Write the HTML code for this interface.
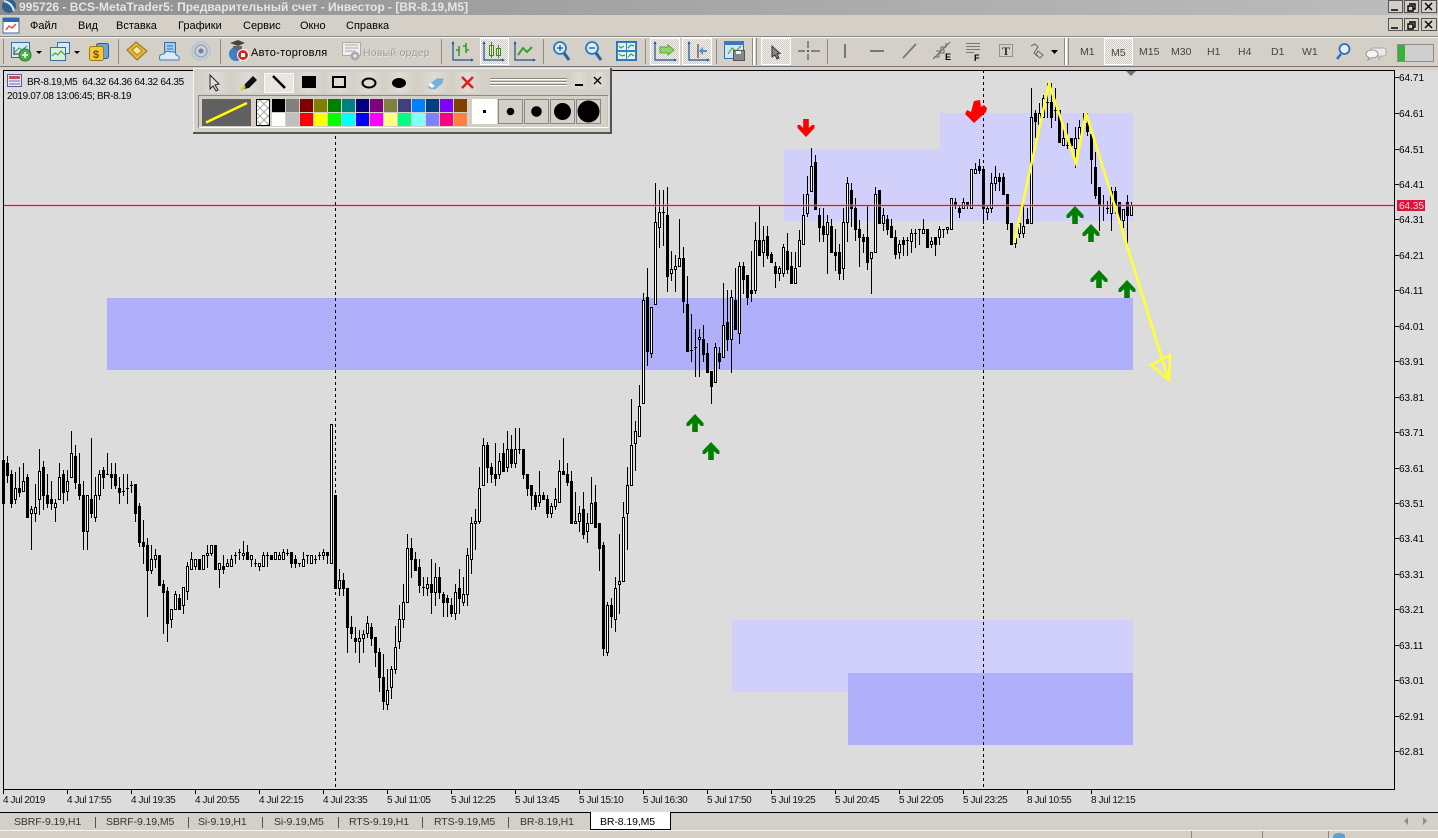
<!DOCTYPE html>
<html><head><meta charset="utf-8"><title>MetaTrader5</title>
<style>
html,body{margin:0;padding:0;background:#d4d0c8;width:1438px;height:838px;overflow:hidden}
svg{display:block;position:absolute;left:0;top:0}
text{font-family:"Liberation Sans","Noto Sans CJK SC",sans-serif;white-space:pre}
.m{font-size:11px;fill:#000}
.p{font-size:10px;fill:#000}
.t{font-size:10px;fill:#111;letter-spacing:-.42px}
.b{font-size:10.5px;fill:#333;letter-spacing:-.1px}
.tf{font-size:10.5px;fill:#444}
</style></head><body>
<svg width="1438" height="838" viewBox="0 0 1438 838" xmlns="http://www.w3.org/2000/svg">
<defs>
<linearGradient id="tg" x1="0" x2="1" y1="0" y2="0"><stop offset="0" stop-color="#8d8d8d"/><stop offset=".4" stop-color="#a3a3a3"/><stop offset="1" stop-color="#bdbdbd"/></linearGradient>
<linearGradient id="bg" x1="0" x2="1" y1="0" y2="0"><stop offset="0" stop-color="#d4d0c8"/><stop offset=".5" stop-color="#dedcd6"/><stop offset="1" stop-color="#d4d0c8"/></linearGradient>
<pattern id="d" width="2" height="2" patternUnits="userSpaceOnUse"><rect width="2" height="2" fill="#f2f1ee"/><rect width="1" height="1" fill="#cfcbc3"/><rect x="1" y="1" width="1" height="1" fill="#cfcbc3"/></pattern>
<pattern id="c" width="8" height="8" patternUnits="userSpaceOnUse"><rect width="8" height="8" fill="#fff"/><path d="M0 0L8 8M8 0L0 8" stroke="#aaa" stroke-width="1"/></pattern>
<polygon id="ga" points="0,0 8.500,9 8.500,12 6,12 2.800,9 2.800,18 -2.800,18 -2.800,9 -6,12 -8.500,12 -8.500,9"/>
</defs>

<!-- title bar -->
<rect x="0" y="0" width="1438" height="15" fill="url(#tg)"/>
<circle cx="9" cy="6" r="7" fill="#2f5f93"/><path d="M4 1Q12 3 14 11" stroke="#dfe8f0" stroke-width="2" fill="none"/>
<text x="19" y="11" style="font-size:12px;font-weight:bold;fill:#e6e6e6">995726 - BCS-MetaTrader5: Предварительный счет - Инвестор - [BR-8.19,M5]</text>

<!-- menu -->
<rect x="0" y="15" width="1438" height="21" fill="#d4d0c8"/>
<rect x="3" y="18" width="16" height="15" fill="#fff" stroke="#3a6ea8"/><rect x="3" y="18" width="16" height="4" fill="#2f66b0"/><path d="M6 30l3-4 3 2 4-4" stroke="#d43" stroke-width="1.3" fill="none"/>
<g class="m"><text class="m" x="30" y="29">Файл</text><text class="m" x="78" y="29">Вид</text><text class="m" x="116" y="29">Вставка</text><text class="m" x="178" y="29">Графики</text><text class="m" x="243" y="29">Сервис</text><text class="m" x="300" y="29">Окно</text><text class="m" x="346" y="29">Справка</text></g>

<!-- window buttons -->
<g stroke="#555" fill="#d4d0c8">
<rect x="1388.500" y="0.500" width="14" height="12"/><rect x="1404.500" y="0.500" width="14" height="12"/><rect x="1421.500" y="0.500" width="15" height="12"/>
<rect x="1388.500" y="18.500" width="14" height="12"/><rect x="1404.500" y="18.500" width="14" height="12"/><rect x="1421.500" y="18.500" width="15" height="12"/>
</g>
<g stroke="#000" fill="none" stroke-width="1.400">
<path d="M1391 10h7M1391 28h7"/>
<path d="M1409 4h6v5h-2M1408 6h5v5h-5z M1409 22h6v5h-2M1408 24h5v5h-5z"/>
<path d="M1425 3l7 7M1432 3l-7 7M1425 21l7 7M1432 21l-7 7"/>
</g>

<!-- toolbar -->
<rect x="0" y="36" width="1438" height="1" fill="#8a8a8a"/><rect x="0" y="37" width="1438" height="1" fill="#f4f3f0"/>
<rect x="0" y="66" width="1438" height="1" fill="#77757a"/><rect x="0" y="67" width="1438" height="3" fill="#d4d0c8"/>
<g stroke="#8e8b84" stroke-width="1">
<path d="M3.500 39v25M118.500 39v25M220.500 39v25M441.500 39v25M543.500 39v25M645.500 39v25M716.500 39v25M827.500 39v25"/>
<path d="M752.500 38v27M756.500 38v27M1064.500 38v27M1068.500 38v27"/>
</g>
<g fill="#fff"><rect x="753" y="38" width="2" height="27"/><rect x="1065" y="38" width="2" height="27"/></g>

<!-- new chart -->
<rect x="11.500" y="42.500" width="18" height="15" fill="#d6e8f6" stroke="#3270a8"/><path d="M14 47v8M14 54h10" stroke="#335" fill="none"/><path d="M15 52l4-4 3 2 5-4" stroke="#3a9a3a" fill="none"/>
<circle cx="25" cy="55" r="6" fill="#4cae4c" stroke="#2a7a2a"/><path d="M22 55h6M25 52v6" stroke="#fff" stroke-width="1.500"/>
<path d="M36 51h6l-3 3z" fill="#000"/>
<!-- profiles -->
<rect x="57.500" y="42.500" width="12" height="11" fill="#d6e8f6" stroke="#3270a8"/>
<rect x="50.500" y="47.500" width="15" height="13" fill="#d8f0d8" stroke="#3270a8"/><path d="M52 56l3-3 3 2 3-4 4 4" stroke="#2b9a2b" fill="none"/>
<path d="M74 51h6l-3 3z" fill="#000"/>
<!-- market -->
<rect x="96.500" y="43.500" width="12" height="15" rx="2" fill="#6aa6dc" stroke="#2c5d94"/>
<rect x="89.500" y="46.500" width="14" height="14" rx="2" fill="#f4c93e" stroke="#a57b10"/>
<text x="93" y="58" style="font-size:11px;font-weight:bold;fill:#735200">$</text>
<!-- books -->
<path d="M127 50l9-8 11 9-10 9z" fill="#e3b73c" stroke="#90701c"/><path d="M132 50l5-4 5 5-5 4z" fill="#f6e4a0" stroke="#a58328"/>
<!-- cloud -->
<rect x="164.500" y="42.500" width="11" height="12" fill="#a6cbee" stroke="#3270a8"/><path d="M167 46h6M167 49h6" stroke="#3270a8"/>
<path d="M160 60q-2-6 4-6q2-4 6-2q6-1 6 3q4 1 3 5z" fill="#dcebf8" stroke="#3a7ec0"/>
<!-- signals -->
<g fill="none" stroke="#a6bedc"><circle cx="201" cy="51" r="9" stroke-width="1"/><circle cx="201" cy="51" r="6" stroke="#8ca8ce" stroke-width="1.500"/></g><circle cx="201" cy="51" r="2.500" fill="#5a82c4"/>
<!-- auto -->
<circle cx="236" cy="54" r="7" fill="#3f7fc8"/><path d="M230 43l8-3 7 3-7 3z" fill="#444"/><path d="M233 46v3q5 2 9 0v-3" fill="#666"/><circle cx="243" cy="55" r="5.500" fill="#d42b1e" stroke="#fff"/><rect x="241" y="53" width="4" height="4" fill="#fff"/>
<text class="m" x="251" y="56" style="font-size:11px;letter-spacing:.3px">Авто-торговля</text>
<!-- order -->
<rect x="342.500" y="42.500" width="18" height="13" fill="#eee" stroke="#aaa"/><path d="M345 45h13M345 48h13M345 51h10" stroke="#aaa"/><circle cx="355" cy="56" r="4.500" fill="#aaa"/><path d="M353 56h4M355 54v4" stroke="#fff"/>
<text x="363.500" y="56.500" style="font-size:10.500px;fill:#f4f3f0;letter-spacing:.2px">Новый ордер</text>
<text x="363" y="56" style="font-size:10.500px;fill:#9a9892;letter-spacing:.2px">Новый ордер</text>

<!-- selected boxes -->
<g fill="url(#d)" stroke="#fff"><rect x="480.500" y="38.500" width="28" height="26"/><rect x="650.500" y="38.500" width="29" height="26"/><rect x="682.500" y="38.500" width="29" height="26"/><rect x="761.500" y="38.500" width="29" height="26"/><rect x="1104.500" y="38.500" width="28" height="26"/></g>

<!-- chart type icons -->
<g fill="none" stroke="#1f4f96" stroke-width="1.200">
<path d="M453 43v17h18M515 43v17h18M484 43v17h18M655 43v17h19M689 43v17h18"/>
</g>
<g fill="#1f4f96"><path d="M451.500 44l1.500-3 1.500 3zM471 58.500l3 1.500-3 1.500zM513.500 44l1.500-3 1.500 3zM533 58.500l3 1.500-3 1.500zM482.500 44l1.500-3 1.500 3zM502 58.500l3 1.500-3 1.500zM653.500 44l1.500-3 1.500 3zM674 58.500l3 1.500-3 1.500zM687.500 44l1.500-3 1.500 3zM707 58.500l3 1.500-3 1.500z"/></g>
<path d="M459 46v10M456 50h3M466 43v10M463 46h3M466 50h3" stroke="#2a9a2a" stroke-width="1.500" fill="none"/>
<rect x="489.500" y="45.500" width="4" height="10" fill="#f3f3c0" stroke="#3a8a2a"/><rect x="496.500" y="48.500" width="4" height="7" fill="#f3f3c0" stroke="#3a8a2a"/><path d="M491.500 42v16M498.500 45v13" stroke="#3a8a2a"/>
<path d="M518 55l5-7 4 4 5-5" stroke="#3aa02a" stroke-width="2" fill="none"/>

<!-- zoom -->
<g fill="#d8ecfa" stroke="#2f78c0" stroke-width="1.800"><circle cx="560" cy="48" r="6"/><circle cx="592" cy="48" r="6"/></g>
<path d="M564 53l5 7M596 53l5 7" stroke="#2a5fa8" stroke-width="3"/>
<path d="M557 48h6M560 45v6M589 48h6" stroke="#1f4f96" stroke-width="1.200"/>
<!-- tile -->
<rect x="616.500" y="41.500" width="20" height="19" fill="#2f82c8" stroke="#2f6fb8"/><g fill="#dff0f8"><rect x="618" y="43" width="8" height="7"/><rect x="627" y="43" width="8" height="7"/><rect x="618" y="52" width="8" height="7"/><rect x="627" y="52" width="8" height="7"/></g>
<path d="M619 46l2 2 3-2M628 48l3-3 3 1M619 54l3 2 3-1M628 57l3-3 3 2" stroke="#2a8a2a" fill="none"/>
<!-- shift / scroll -->
<path d="M660 47h8v-2l6 5-6 5v-2h-8z" fill="#8fd46a" stroke="#5aa83a"/>
<path d="M698 44v14" stroke="#543" stroke-width="1.200"/><path d="M707 50h-4v-3l-4 4 4 4v-3h4z" fill="#4f90d8"/>
<!-- template -->
<rect x="724.500" y="41.500" width="19" height="17" fill="#cfe6f5" stroke="#3270a8"/><rect x="724" y="41" width="20" height="4" fill="#3a78c0"/><path d="M728 54l4-6 4 3 5-5" stroke="#3a9a2a" fill="none"/>
<rect x="733.500" y="50.500" width="11" height="10" fill="#888" stroke="#555"/><rect x="736" y="51" width="5" height="3" fill="#eee"/>

<!-- cursor & tools -->
<path d="M772 46l0 11 3-2 2 4 2-1-2-4 3-.5z" fill="#888" stroke="#333"/>
<path d="M808 41v7M808 54v6M798 51h7M811 51h9" stroke="#555" stroke-width="1.200"/><rect x="807" y="50" width="2" height="2" fill="#555"/>
<path d="M845 44v14M870 51h14" stroke="#777" stroke-width="2"/><path d="M903 58l13-14" stroke="#777" stroke-width="1.800"/>
<path d="M933 59l17-17M936 51h5v-4h5v-4M934 57h5v-4h5v-4" stroke="#666" fill="none"/><text x="945" y="60" style="font-size:9px;font-weight:bold;fill:#000">E</text>
<g fill="#777"><path d="M966 43h14v1h-14zM966 46h14v1h-14zM966 49h14v1h-14zM966 52h8v1h-8z" /></g><text x="974" y="61" style="font-size:9px;font-weight:bold;fill:#000">F</text>
<rect x="999.500" y="44.500" width="13" height="12" fill="none" stroke="#555" stroke-dasharray="1 1"/><text x="1002" y="55" style="font-size:12px;font-weight:bold;font-family:'Liberation Serif',serif;fill:#333">T</text>
<path d="M1031 46l4-2 3 3-4 6 4 3M1038 51l5 4-3 3-4-3z" stroke="#666" fill="none"/>
<path d="M1051 50h7l-3.500 4z" fill="#000"/>

<!-- timeframes -->
<text class="tf" x="1080" y="55">M1</text><text class="tf" x="1111" y="56">M5</text><text class="tf" x="1139" y="55">M15</text><text class="tf" x="1171" y="55">M30</text><text class="tf" x="1207" y="55">H1</text><text class="tf" x="1238" y="55">H4</text><text class="tf" x="1271" y="55">D1</text><text class="tf" x="1302" y="55">W1</text>
<circle cx="1344.500" cy="49" r="5" fill="#e6f0fa" stroke="#2c6fc0" stroke-width="1.800"/><path d="M1341 54l-4 5" stroke="#2c6fc0" stroke-width="2.500"/>
<path d="M1371 48h13q2 0 2 2v4q0 2-2 2h-3l-2 3v-3h-8z" fill="#e8e8e8" stroke="#aaa"/><ellipse cx="1372" cy="54" rx="6" ry="4" fill="#f6f6f6" stroke="#999"/><path d="M1369 57l-1 3 3-2" fill="#f6f6f6" stroke="#999"/>
<rect x="1397.500" y="44.500" width="36" height="17" fill="#cfcfcf" stroke="#8d8d8d"/><rect x="1398" y="45" width="7" height="16" fill="#38b138"/>

<!-- chart bg -->
<rect x="0" y="70" width="1438" height="742" fill="#dcdcdc"/>
<rect x="0" y="67" width="1438" height="3" fill="#d4d0c8"/>

<!-- zones -->
<path d="M784 149H940V113H1133V221H784z" fill="#d0d0fb"/>
<rect x="732" y="620" width="401" height="72" fill="#d0d0fb"/>
<rect x="107" y="298" width="1026" height="72" fill="#b0b0fa"/>
<rect x="848" y="673" width="285" height="72" fill="#b0b0fa"/>

<!-- candles -->
<g transform="translate(.5 .5)">
<path fill="none" stroke="#000" stroke-width="1" stroke-linecap="square" d="M3 460V503M7 456V482M11 470V507M15 472V503M19 467V496M23 463V491M27 474V517M31 506V549M35 484V521M39 449V514M43 461V509M47 474V507M51 481V509M55 499V521M59 463V499M63 470V503M67 470V500M71 431V477M75 445V488M79 453V499M83 481V549M87 495V549M91 438V517M95 477V521M99 470V499M103 467V488M107 453V474M111 463V488M115 463V488M119 477V503M123 474V495M127 474V503M131 481V492M135 484V521M139 503V546M143 520V563M147 538V616M151 545V573M155 549V567M159 555V585M163 580V633M167 587V641M171 609V627M175 591V609M179 594V609M183 587V613M187 562V599M191 552V569M195 559V569M199 559V569M203 555V569M207 545V567M211 545V555M215 545V569M219 563V587M223 555V573M227 559V566M231 555V566M235 552V563M239 549V559M243 541V559M247 545V559M251 555V566M255 559V566M259 563V570M263 552V566M267 552V566M271 555V559M275 552V559M279 552V559M283 549V559M287 549V555M291 552V567M295 555V567M299 563V566M303 552V566M307 555V563M311 555V563M315 555V563M319 552V559M323 549V559M327 552V563M331 424V563M335 495V588M339 569V595M343 573V595M347 588V652M351 616V638M355 627V652M359 630V662M363 630V652M367 616V637M371 623V645M375 637V666M379 648V691M383 654V709M387 669V709M391 666V698M395 626V673M399 605V648M403 584V627M407 534V602M411 538V577M415 552V570M419 559V592M423 577V595M427 577V595M431 559V613M435 563V605M439 567V598M443 592V616M447 595V616M451 598V616M455 584V619M459 569V613M463 577V605M467 548V605M471 517V573M475 509V549M479 467V523M483 438V485M487 442V482M491 463V482M495 443V485M499 453V478M503 443V471M507 431V471M511 435V467M515 428V467M519 428V453M523 449V478M527 474V495M531 485V509M535 492V509M539 471V506M543 492V499M547 495V517M551 503V517M555 488V509M559 460V502M563 438V474M567 463V485M571 471V523M575 492V523M579 506V531M583 492V538M587 513V542M591 477V523M595 485V527M599 523V570M603 542V655M607 602V655M611 598V627M615 577V631M619 534V613M623 502V581M627 467V549M631 399V485M635 421V470M639 385V436M643 293V403M647 268V365M651 307V357M655 183V304M659 190V247M663 190V245M667 187V291M671 251V280M675 255V291M679 219V266M683 247V312M687 276V351M691 314V361M695 329V376M699 329V376M703 325V361M707 343V372M711 371V403M715 343V382M719 347V368M723 283V357M727 290V350M731 290V372M735 268V329M739 262V343M743 262V293M747 275V304M751 251V301M755 222V293M759 205V255M763 226V266M767 226V258M771 252V262M775 262V287M779 266V280M783 244V276M787 233V273M791 252V283M795 252V283M799 230V266M803 194V244M807 176V216M811 148V191M815 155V209M819 208V241M823 208V241M827 215V273M831 219V252M835 229V270M839 244V279M843 208V279M847 177V241M851 183V226M855 198V240M859 220V266M863 234V252M867 205V269M871 252V293M875 187V252M879 190V223M883 208V230M887 215V234M891 219V237M895 230V258M899 240V258M903 237V255M907 237V255M911 229V252M915 229V247M919 229V244M923 219V233M927 229V247M931 237V247M935 237V255M939 226V244M943 229V237M947 227V233M951 198V229M955 198V208M959 205V217M963 198V208M967 202V208M971 169V208M975 163V173M979 159V173M983 166V223M987 205V219M991 173V212M995 166V190M999 173V190M1003 173V194M1007 194V229M1011 223V244M1015 237V247M1019 213V237M1023 203V237M1027 208V223M1031 88V223M1035 110V137M1039 103V127M1043 95V117M1047 83V117M1051 83V127M1055 88V120M1059 110V142M1063 127V145M1067 123V148M1071 138V148M1075 127V167M1079 120V138M1083 113V127M1087 113V135M1091 131V183M1095 152V198M1099 187V230M1103 195V220M1107 201V213M1111 187V230M1115 187V213M1119 202V223M1123 209V227M1127 195V243M1131 202V215M106 474h2M122 491h2M126 488h2M130 485h2M234 555h2M238 552h2M254 563h2M266 555h2M286 553h2M298 563h2M306 555h2M314 559h2M318 555h2M422 587h2M518 449h2M662 212h2M690 350h2M694 347h2M906 240h2M914 233h2M918 229h2M942 229h2M1046 102h2M1054 110h2M1066 145h2M1102 205h2M1106 208h2"/>
<path fill="#fff" stroke="#000" stroke-width="1" d="M14 488h2v11h-2zM22 481h2v10h-2zM30 509h2v4h-2zM34 507h2v6h-2zM38 471h2v28h-2zM54 503h2v4h-2zM58 477h2v22h-2zM66 481h2v10h-2zM70 453h2v24h-2zM86 495h2v36h-2zM94 495h2v22h-2zM98 474h2v21h-2zM150 559h2v11h-2zM154 555h2v4h-2zM170 609h2v10h-2zM174 594h2v15h-2zM182 587h2v18h-2zM186 566h2v25h-2zM190 559h2v10h-2zM194 559h2v7h-2zM202 555h2v14h-2zM206 553h2v2h-2zM210 545h2v8h-2zM218 563h2v6h-2zM226 563h2v3h-2zM230 559h2v7h-2zM242 553h2v2h-2zM250 555h2v4h-2zM258 563h2v3h-2zM262 555h2v11h-2zM274 552h2v7h-2zM278 555h2v4h-2zM282 552h2v7h-2zM302 559h2v7h-2zM310 555h2v8h-2zM322 552h2v3h-2zM330 424h2v139h-2zM338 580h2v8h-2zM358 638h2v3h-2zM362 634h2v4h-2zM366 623h2v10h-2zM386 690h2v14h-2zM390 669h2v18h-2zM394 647h2v22h-2zM398 619h2v22h-2zM402 602h2v17h-2zM406 548h2v54h-2zM426 584h2v4h-2zM434 577h2v15h-2zM454 592h2v21h-2zM462 594h2v8h-2zM466 555h2v39h-2zM470 523h2v36h-2zM474 521h2v2h-2zM478 488h2v33h-2zM482 445h2v40h-2zM498 461h2v13h-2zM506 449h2v18h-2zM514 449h2v14h-2zM538 495h2v7h-2zM550 506h2v7h-2zM554 499h2v7h-2zM558 471h2v31h-2zM574 521h2v2h-2zM578 513h2v8h-2zM586 523h2v8h-2zM590 503h2v20h-2zM606 605h2v47h-2zM614 588h2v31h-2zM618 581h2v3h-2zM622 517h2v64h-2zM626 485h2v28h-2zM630 445h2v40h-2zM634 431h2v12h-2zM638 406h2v30h-2zM642 300h2v103h-2zM650 307h2v46h-2zM654 222h2v82h-2zM658 212h2v15h-2zM670 269h2v4h-2zM674 266h2v3h-2zM678 258h2v8h-2zM698 337h2v2h-2zM714 347h2v35h-2zM722 325h2v32h-2zM730 297h2v42h-2zM738 266h2v67h-2zM754 240h2v50h-2zM762 240h2v12h-2zM778 268h2v5h-2zM782 247h2v26h-2zM794 268h2v15h-2zM798 240h2v26h-2zM802 215h2v29h-2zM806 194h2v19h-2zM810 166h2v25h-2zM826 222h2v12h-2zM842 222h2v46h-2zM846 183h2v39h-2zM870 252h2v6h-2zM874 194h2v58h-2zM882 215h2v8h-2zM898 244h2v8h-2zM910 233h2v8h-2zM922 229h2v4h-2zM930 241h2v3h-2zM938 229h2v8h-2zM946 227h2v2h-2zM950 198h2v31h-2zM962 202h2v6h-2zM970 169h2v39h-2zM974 169h2v4h-2zM986 208h2v4h-2zM990 183h2v25h-2zM994 177h2v6h-2zM1014 238h2v5h-2zM1018 223h2v10h-2zM1022 226h2v7h-2zM1030 117h2v106h-2zM1038 113h2v11h-2zM1042 98h2v19h-2zM1062 138h2v7h-2zM1074 138h2v10h-2zM1078 127h2v11h-2zM1110 191h2v22h-2zM1122 209h2v11h-2zM1130 205h2v10h-2z"/>
<path fill="#000" stroke="#000" stroke-width="1" d="M2 460h2v43h-2zM6 463h2v12h-2zM10 474h2v29h-2zM18 488h2v4h-2zM26 477h2v40h-2zM42 467h2v28h-2zM46 495h2v8h-2zM50 499h2v4h-2zM62 474h2v18h-2zM74 456h2v26h-2zM78 484h2v11h-2zM82 495h2v36h-2zM90 499h2v14h-2zM102 470h2v7h-2zM110 474h2v3h-2zM114 474h2v11h-2zM118 488h2v4h-2zM134 484h2v29h-2zM138 506h2v36h-2zM142 542h2v4h-2zM146 545h2v25h-2zM158 555h2v30h-2zM162 584h2v8h-2zM166 591h2v32h-2zM178 598h2v11h-2zM198 559h2v10h-2zM214 545h2v24h-2zM222 566h2v3h-2zM246 552h2v7h-2zM270 555h2v4h-2zM290 552h2v11h-2zM294 559h2v4h-2zM326 552h2v3h-2zM334 495h2v93h-2zM342 580h2v8h-2zM346 588h2v39h-2zM350 627h2v6h-2zM354 638h2v3h-2zM370 627h2v11h-2zM374 637h2v15h-2zM378 652h2v25h-2zM382 677h2v24h-2zM410 548h2v11h-2zM414 559h2v11h-2zM418 567h2v18h-2zM430 584h2v8h-2zM438 577h2v15h-2zM442 594h2v8h-2zM446 598h2v4h-2zM450 605h2v8h-2zM458 588h2v10h-2zM486 445h2v22h-2zM490 467h2v7h-2zM494 474h2v4h-2zM502 453h2v18h-2zM510 449h2v14h-2zM522 449h2v25h-2zM526 474h2v14h-2zM530 485h2v10h-2zM534 495h2v11h-2zM542 495h2v4h-2zM546 499h2v14h-2zM562 471h2v3h-2zM566 474h2v8h-2zM570 481h2v42h-2zM582 509h2v25h-2zM594 502h2v25h-2zM598 523h2v25h-2zM602 545h2v103h-2zM610 605h2v11h-2zM646 297h2v54h-2zM666 215h2v61h-2zM682 258h2v43h-2zM686 304h2v47h-2zM702 339h2v15h-2zM706 353h2v19h-2zM710 371h2v15h-2zM718 353h2v8h-2zM726 322h2v17h-2zM734 300h2v29h-2zM742 266h2v13h-2zM746 275h2v22h-2zM750 290h2v3h-2zM758 240h2v15h-2zM766 236h2v19h-2zM770 254h2v8h-2zM774 266h2v7h-2zM786 251h2v18h-2zM790 266h2v17h-2zM814 162h2v47h-2zM818 215h2v12h-2zM822 226h2v8h-2zM830 226h2v26h-2zM834 252h2v3h-2zM838 252h2v21h-2zM850 190h2v18h-2zM854 208h2v21h-2zM858 229h2v8h-2zM862 237h2v4h-2zM866 237h2v25h-2zM878 190h2v33h-2zM886 219h2v10h-2zM890 226h2v11h-2zM894 237h2v17h-2zM902 240h2v4h-2zM926 229h2v18h-2zM934 237h2v7h-2zM954 202h2v3h-2zM958 208h2v4h-2zM966 202h2v3h-2zM978 166h2v4h-2zM982 169h2v39h-2zM998 177h2v4h-2zM1002 177h2v17h-2zM1006 194h2v29h-2zM1010 223h2v21h-2zM1026 219h2v4h-2zM1034 113h2v8h-2zM1050 102h2v15h-2zM1058 110h2v32h-2zM1070 138h2v7h-2zM1086 123h2v8h-2zM1090 134h2v25h-2zM1094 167h2v28h-2zM1098 187h2v18h-2zM1114 191h2v14h-2zM1118 202h2v18h-2zM1126 202h2v13h-2z"/>
</g>

<!-- red price line -->
<rect x="4" y="204" width="1390" height="3" fill="#f0a0b0" opacity=".4"/>
<rect x="4" y="205" width="1390" height="1" fill="#e8102c"/>

<!-- period separators -->
<path d="M335.500 70V789M983.500 70V789" stroke="#000" stroke-dasharray="3 3" fill="none"/>

<!-- yellow lines -->
<path d="M1014 243L1049 84L1076 163L1086 113L1168 378" fill="none" stroke="#ffff33" stroke-width="2.600"/>
<path d="M1169 380L1151 365L1170 355z" fill="none" stroke="#ffff33" stroke-width="2.500"/>

<!-- arrows -->
<g fill="#008000">
<use href="#ga" x="1075" y="206"/><use href="#ga" x="1091" y="224"/><use href="#ga" x="1099" y="270"/><use href="#ga" x="1127" y="280"/><use href="#ga" x="695" y="414"/><use href="#ga" x="711" y="442"/>
</g>
<g fill="#ff0000">
<use href="#ga" transform="translate(806 137) scale(1 -1)"/>
<polygon points="974,123 965,114 967,110 971,112 974,101 980,100 981,107 984,105 987,108 986,112"/>
</g>

<!-- frame -->
<rect x="3.500" y="70.500" width="1391" height="719" fill="none" stroke="#000"/>
<path d="M1126 71h10l-5 5z" fill="#6a737e"/>

<!-- price axis -->
<g stroke="#000"><path d="M1395 77.500h4M1395 113.500h4M1395 149.500h4M1395 184.500h4M1395 219.500h4M1395 255.500h4M1395 290.500h4M1395 326.500h4M1395 361.500h4M1395 397.500h4M1395 432.500h4M1395 468.500h4M1395 503.500h4M1395 538.500h4M1395 574.500h4M1395 609.500h4M1395 645.500h4M1395 680.500h4M1395 716.500h4M1395 751.500h4"/></g>
<text class="p" x="1399" y="81">64.71</text><text class="p" x="1399" y="117">64.61</text><text class="p" x="1399" y="153">64.51</text><text class="p" x="1399" y="188">64.41</text><text class="p" x="1399" y="223">64.31</text><text class="p" x="1399" y="259">64.21</text><text class="p" x="1399" y="294">64.11</text><text class="p" x="1399" y="330">64.01</text><text class="p" x="1399" y="365">63.91</text><text class="p" x="1399" y="401">63.81</text><text class="p" x="1399" y="436">63.71</text><text class="p" x="1399" y="472">63.61</text><text class="p" x="1399" y="507">63.51</text><text class="p" x="1399" y="542">63.41</text><text class="p" x="1399" y="578">63.31</text><text class="p" x="1399" y="613">63.21</text><text class="p" x="1399" y="649">63.11</text><text class="p" x="1399" y="684">63.01</text><text class="p" x="1399" y="720">62.91</text><text class="p" x="1399" y="755">62.81</text>
<rect x="1397" y="200" width="28" height="11" fill="#dc143c"/><text x="1399" y="209" style="font-size:10px;fill:#f4d8dc">64.35</text>

<!-- time axis -->
<path d="M3.500 790v4M67.500 790v4M131.500 790v4M195.500 790v4M259.500 790v4M323.500 790v4M387.500 790v4M451.500 790v4M515.500 790v4M579.500 790v4M643.500 790v4M707.500 790v4M771.500 790v4M835.500 790v4M899.500 790v4M963.500 790v4M1027.500 790v4M1091.500 790v4" stroke="#000"/>
<text class="t" x="3" y="803">4 Jul 2019</text><text class="t" x="67" y="803">4 Jul 17:55</text><text class="t" x="131" y="803">4 Jul 19:35</text><text class="t" x="195" y="803">4 Jul 20:55</text><text class="t" x="259" y="803">4 Jul 22:15</text><text class="t" x="323" y="803">4 Jul 23:35</text><text class="t" x="387" y="803">5 Jul 11:05</text><text class="t" x="451" y="803">5 Jul 12:25</text><text class="t" x="515" y="803">5 Jul 13:45</text><text class="t" x="579" y="803">5 Jul 15:10</text><text class="t" x="643" y="803">5 Jul 16:30</text><text class="t" x="707" y="803">5 Jul 17:50</text><text class="t" x="771" y="803">5 Jul 19:25</text><text class="t" x="835" y="803">5 Jul 20:45</text><text class="t" x="899" y="803">5 Jul 22:05</text><text class="t" x="963" y="803">5 Jul 23:25</text><text class="t" x="1027" y="803">8 Jul 10:55</text><text class="t" x="1091" y="803">8 Jul 12:15</text>

<!-- chart info -->
<rect x="7.500" y="74.500" width="14" height="12" fill="#e8e8f4" stroke="#5a5a9a"/><rect x="9" y="76" width="11" height="3" fill="#c05060"/><path d="M9 81h11M9 84h11" stroke="#7070b0"/>
<text x="27" y="85" style="font-size:10px;fill:#000;letter-spacing:-.3px">BR-8.19,M5  64.32 64.36 64.32 64.35</text>
<text x="7" y="99" style="font-size:10px;fill:#000;letter-spacing:-.35px">2019.07.08 13:06:45; BR-8.19</text>

<!-- floating toolbar -->
<rect x="193" y="68" width="419" height="65" fill="#d4d0c8"/>
<path d="M193.500 133V68.500H611" stroke="#f4f3f0" fill="none"/>
<path d="M611 68v65H193" stroke="#55555a" stroke-width="2" fill="none"/>
<g fill="url(#bg)"><rect x="200" y="72" width="29" height="21"/><rect x="234" y="72" width="29" height="21"/><rect x="294" y="72" width="30" height="21"/><rect x="324" y="72" width="30" height="21"/><rect x="354" y="72" width="30" height="21"/><rect x="384" y="72" width="30" height="21"/><rect x="420" y="72" width="30" height="21"/><rect x="453" y="72" width="30" height="21"/><rect x="570" y="72" width="18" height="17"/><rect x="590" y="72" width="17" height="17"/></g>
<rect x="264.500" y="73.500" width="29" height="19" fill="#e8e6e0" stroke="#f8f8f6"/>
<path d="M210 75l0 14 3-3 3 5 2-1-3-5 4-1z" fill="#ddd" stroke="#222"/>
<path d="M243 89l2-5 8-8 4 4-8 8z" fill="#111"/><path d="M241 90l4-4" stroke="#d8d800" stroke-width="2.500"/>
<path d="M273 76l12 12" stroke="#000" stroke-width="2.500"/>
<rect x="302" y="76" width="14" height="12" fill="#000"/>
<rect x="333" y="77" width="12" height="10" fill="none" stroke="#000" stroke-width="2"/>
<ellipse cx="369" cy="83" rx="6.500" ry="4.500" fill="none" stroke="#000" stroke-width="2"/>
<ellipse cx="399" cy="83" rx="7" ry="5" fill="#000"/>
<path d="M429 85l8-6 6 0-1 4-7 6-6-1z" fill="#6ab4e8" stroke="#8ab"/><path d="M428 85l4 3 3-2-4-3z" fill="#fff"/>
<path d="M462 77l11 11M473 77l-11 11" stroke="#e02020" stroke-width="2.500"/>
<path d="M490 78.500h77M490 81.500h77M490 84.500h77" stroke="#8a8880" fill="none"/><path d="M490 79.500h77M490 82.500h77M490 85.500h77" stroke="#fff" fill="none"/>
<rect x="575" y="84" width="8" height="2" fill="#000"/>
<path d="M594 77l7 7M601 77l-7 7" stroke="#000" stroke-width="1.300"/>
<rect x="198.500" y="95.500" width="409" height="32" fill="none" stroke="#8a8880"/>
<path d="M199 127.500H608V96" stroke="#fff" fill="none"/>
<rect x="202" y="99" width="49" height="27" fill="#606060"/>
<path d="M206 122.500L247 103" stroke="#ffff00" stroke-width="2.500"/>
<rect x="256.500" y="99.500" width="13" height="26" fill="url(#c)" stroke="#000"/>
<g>
<rect x="272" y="99" width="13" height="13" fill="#000"/><rect x="286" y="99" width="13" height="13" fill="#808080"/><rect x="300" y="99" width="13" height="13" fill="#800000"/><rect x="314" y="99" width="13" height="13" fill="#808000"/><rect x="328" y="99" width="13" height="13" fill="#008000"/><rect x="342" y="99" width="13" height="13" fill="#008080"/><rect x="356" y="99" width="13" height="13" fill="#000080"/><rect x="370" y="99" width="13" height="13" fill="#800080"/><rect x="384" y="99" width="13" height="13" fill="#808040"/><rect x="398" y="99" width="13" height="13" fill="#404080"/><rect x="412" y="99" width="13" height="13" fill="#0080ff"/><rect x="426" y="99" width="13" height="13" fill="#004080"/><rect x="440" y="99" width="13" height="13" fill="#8000ff"/><rect x="454" y="99" width="13" height="13" fill="#804000"/>
<rect x="272" y="113" width="13" height="13" fill="#fff"/><rect x="286" y="113" width="13" height="13" fill="#c0c0c0"/><rect x="300" y="113" width="13" height="13" fill="#ff0000"/><rect x="314" y="113" width="13" height="13" fill="#ffff00"/><rect x="328" y="113" width="13" height="13" fill="#00ff00"/><rect x="342" y="113" width="13" height="13" fill="#00ffff"/><rect x="356" y="113" width="13" height="13" fill="#0000ff"/><rect x="370" y="113" width="13" height="13" fill="#ff00ff"/><rect x="384" y="113" width="13" height="13" fill="#ffff80"/><rect x="398" y="113" width="13" height="13" fill="#00ff80"/><rect x="412" y="113" width="13" height="13" fill="#80ffff"/><rect x="426" y="113" width="13" height="13" fill="#8080ff"/><rect x="440" y="113" width="13" height="13" fill="#ff0080"/><rect x="454" y="113" width="13" height="13" fill="#ff8040"/>
</g>
<rect x="472" y="99" width="25" height="25" fill="#fff"/>
<g fill="none" stroke="#8a8880"><rect x="498.500" y="99.500" width="24" height="24"/><rect x="524.500" y="99.500" width="24" height="24"/><rect x="550.500" y="99.500" width="24" height="24"/><rect x="576.500" y="99.500" width="24" height="24"/></g>
<g fill="#000"><rect x="483" y="110" width="3" height="3"/><circle cx="510.500" cy="111.500" r="3.800"/><circle cx="536.500" cy="111.500" r="5.300"/><circle cx="562.500" cy="111.500" r="8.500"/><circle cx="588.500" cy="111.500" r="11"/></g>

<!-- tab bar -->
<rect x="0" y="812" width="1438" height="26" fill="#d4d0c8"/>
<rect x="0" y="812" width="1438" height="1" fill="#000"/>
<rect x="0" y="830" width="1438" height="1" fill="#f4f3f0"/>
<path d="M95.500 817v11M188.500 817v11M262.500 817v11M338.500 817v11M422.500 817v11M508.500 817v11" stroke="#55534e"/>
<text class="b" x="14" y="825">SBRF-9.19,H1</text><text class="b" x="106" y="825">SBRF-9.19,M5</text><text class="b" x="198" y="825">Si-9.19,H1</text><text class="b" x="274" y="825">Si-9.19,M5</text><text class="b" x="349" y="825">RTS-9.19,H1</text><text class="b" x="434" y="825">RTS-9.19,M5</text><text class="b" x="520" y="825">BR-8.19,H1</text>
<path d="M590.500 812.500V829.500H670.500V812.500" fill="#fff" stroke="#000"/>
<rect x="591" y="812" width="79" height="1" fill="#fff"/>
<text class="b" x="600" y="825" style="fill:#000">BR-8.19,M5</text>
<path d="M1408 817v8l-4-4zM1423 817v8l4-4z" fill="#8f8d88"/>
<path d="M1191.500 831v7M1262.500 831v7M1328.500 831v7" stroke="#8a8880"/>
<path d="M1333 838q0-5 5-5t7 2v3z" fill="#5aa0d8"/>
</svg>
</body></html>
